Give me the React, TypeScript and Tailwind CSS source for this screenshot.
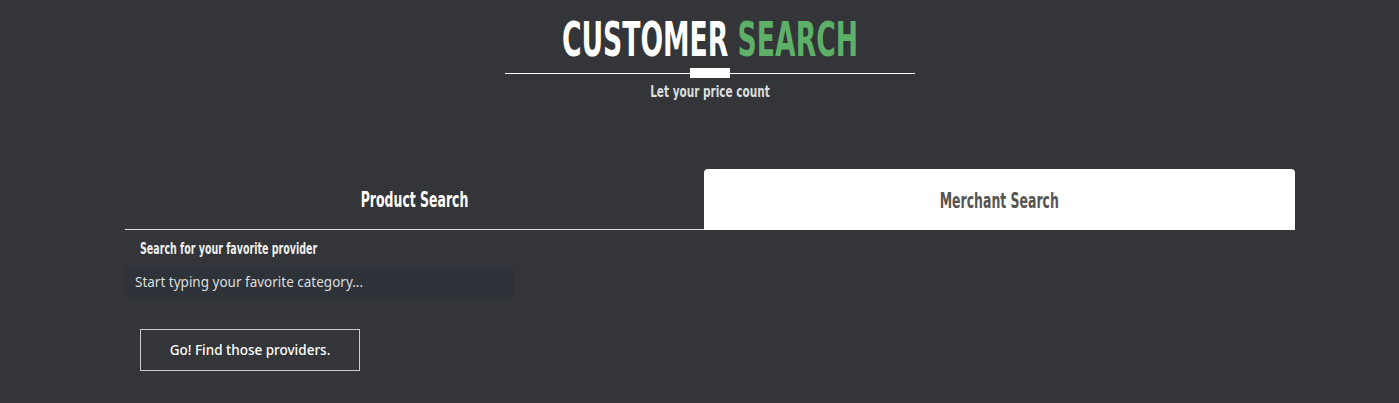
import React from "react";

const cond = { fontFamily: '"DejaVu Sans Condensed", "Liberation Sans", sans-serif' };
const body = { fontFamily: '"Noto Sans", "Open Sans", sans-serif' };

export default function App() {
  return (
    <div className="min-h-[403px] w-full bg-[#333539] pl-[21px] text-white">
      <div className="flex flex-col items-center pt-[13px]">
        <h1 style={cond} className="h-[52px] text-[48px] font-bold leading-[52px] uppercase">
          <span className="inline-block scale-x-[0.617] whitespace-nowrap">
            Customer <span className="text-[#5eb068]">Search</span>
          </span>
        </h1>
        <div className="relative mt-[3px] h-[10px] w-[410px] flex items-center justify-center">
          <div className="h-px w-full bg-white" />
          <div className="absolute left-[185px] top-0 h-[10px] w-[40px] bg-white" />
        </div>
        <p style={cond} className="mt-[4px] h-[20px] text-[16px] font-bold leading-[20px] text-[#dddddd]">
          <span className="inline-block scale-x-[0.73] whitespace-nowrap">Let your price count</span>
        </p>
      </div>

      <div className="mx-auto mt-[67px] w-[1170px]">
        <div className="flex h-[61px]">
          <div className="flex w-[579px] items-center justify-center border-b border-[#dddddd] pt-[4px]">
            <span style={cond} className="inline-block scale-x-[0.66] whitespace-nowrap text-[21px] font-bold text-white">Product Search</span>
          </div>
          <div className="flex flex-1 items-center justify-center rounded-t-[4px] bg-white pt-[4px]">
            <span style={cond} className="inline-block scale-x-[0.66] whitespace-nowrap text-[21px] font-bold text-[#555555]">Merchant Search</span>
          </div>
        </div>
        <div className="pt-[10px]">
          <div style={cond} className="pl-[15px] text-[16px] font-bold leading-[17px] text-[#eeeeee]">
            <span className="inline-block origin-left scale-x-[0.66] whitespace-nowrap">Search for your favorite provider</span>
          </div>
          <input
            style={body}
            className="mt-[9px] block h-[32px] w-[389px] bg-[#2d3338] px-[10px] text-[13.5px] text-[#dddddd] placeholder:text-[#dddddd] outline-none"
            placeholder="Start typing your favorite category..."
          />
          <div className="pl-[15px] pt-[31px]">
            <button
              style={body}
              className="h-[42px] w-[220px] border border-[#cccccc] text-[13.5px] font-medium text-white"
            >
              Go! Find those providers.
            </button>
          </div>
        </div>
      </div>
    </div>
  );
}
